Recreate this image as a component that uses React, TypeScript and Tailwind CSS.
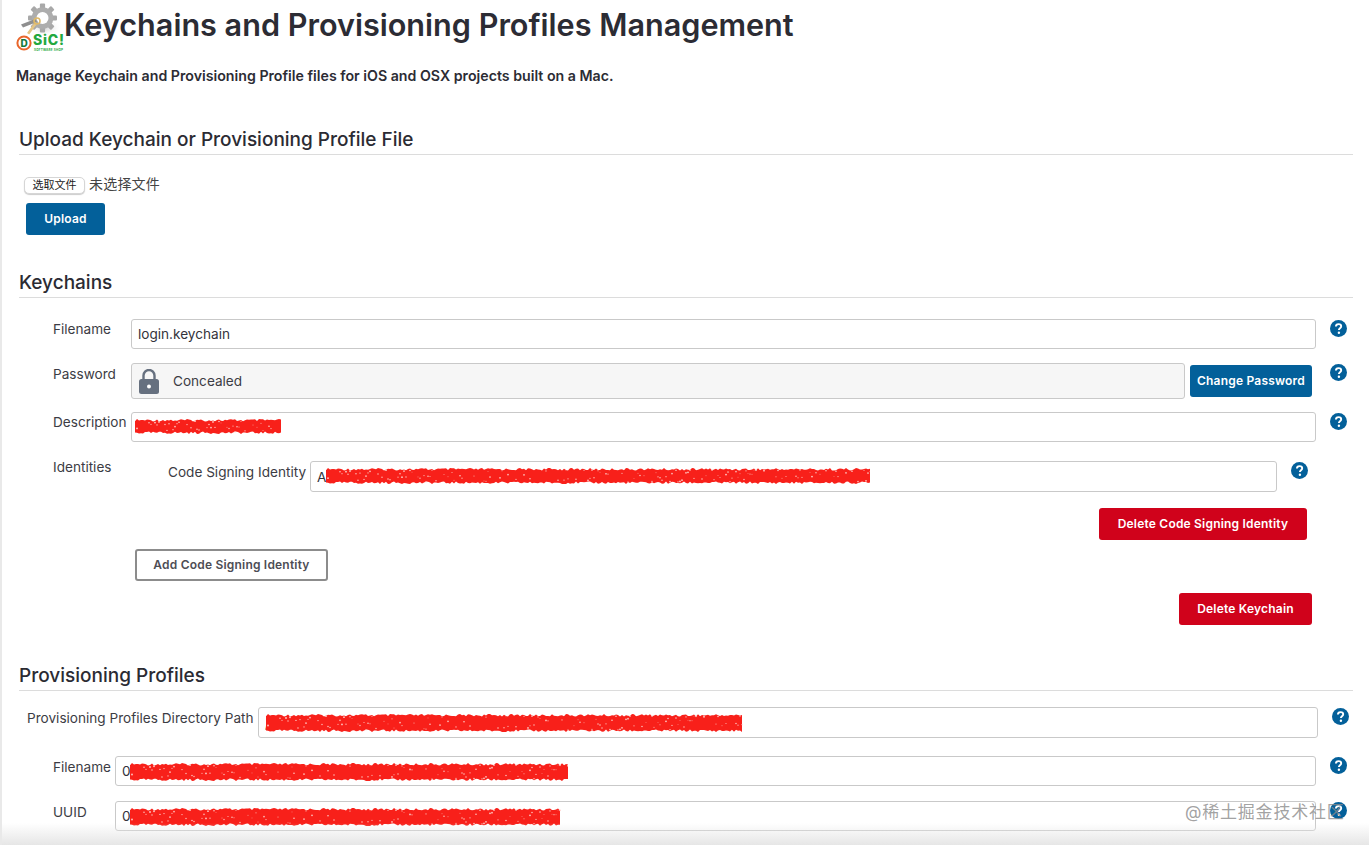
import type { ReactNode } from 'react';

function HelpIcon() {
  return (
    <svg viewBox="0 0 17 17" className="w-[17px] h-[17px] shrink-0">
      <circle cx="8.5" cy="8.5" r="8.5" fill="#03609a" />
      <path d="M5.9 6.6c0-1.6 1.2-2.5 2.7-2.5s2.6.9 2.6 2.2c0 1.9-2.3 1.9-2.3 3.6" fill="none" stroke="#fff" strokeWidth="1.9" />
      <circle cx="8.9" cy="12.7" r="1.2" fill="#fff" />
    </svg>
  );
}

function LockIcon() {
  return (
    <svg viewBox="0 0 20 25" className="w-[20px] h-[25px] shrink-0">
      <path d="M4.5 11V6.5a5.5 5.5 0 0 1 11 0V11" fill="none" stroke="#66707f" strokeWidth="2.4" />
      <rect x="0" y="10" width="20" height="15" rx="2.5" fill="#66707f" />
      <circle cx="10" cy="17.5" r="2" fill="#fff" />
    </svg>
  );
}

// the red marker that hides values in the screenshot
function noise(n: number) {
  const v = Math.sin(n * 12.9898) * 43758.5453;
  return v - Math.floor(v);
}

function Scribble({ width, height, className }: { width: number; height: number; className: string }) {
  const top: string[] = [];
  const bottom: string[] = [];
  const specks: ReactNode[] = [];
  for (let x = 0, i = 1; x <= width; x += 2, i++) {
    top.push(`${x},${(noise(i) * 2.5).toFixed(1)}`);
    bottom.unshift(`${x},${(height - noise(i + 500) * 2.5).toFixed(1)}`);
    if (noise(i + 900) > 0.55) {
      specks.push(
        <circle key={i} cx={x} cy={2 + noise(i + 1300) * (height - 4)} r={0.4 + noise(i + 1700) * 0.5} fill="#ffc9c4" />,
      );
    }
  }
  return (
    <svg width={width} height={height} className={className}>
      <polygon points={[...top, ...bottom].join(' ')} fill="#f8201a" />
      {specks}
    </svg>
  );
}

function Logo() {
  const teeth = [0, 45, 90, 135, 180, 225, 270, 315];
  return (
    <svg width="50" height="52" viewBox="0 0 50 52" className="shrink-0 -ml-px">
      <defs>
        <radialGradient id="halo" cx="50%" cy="50%" r="50%">
          <stop offset="0%" stopColor="#d4d4d4" />
          <stop offset="100%" stopColor="#ffffff" stopOpacity="0" />
        </radialGradient>
      </defs>
      <ellipse cx="29" cy="26" rx="17" ry="9" fill="url(#halo)" />
      <g transform="translate(26.5 16)">
        {teeth.map((r) => (
          <rect key={r} x="-2.6" y="-14.5" width="5.2" height="6" rx="1" fill="#a8a8a8" transform={`rotate(${r})`} />
        ))}
        <circle r="10.8" fill="#adadad" />
        <circle r="6" fill="#fff" />
      </g>
      <path d="M5 22.5l14-5.5 2 3-14 5.5z" fill="#8f8f8f" />
      <path d="M11 31l8-11 2.2 1.6-8 11z" fill="#e4c585" />
      <circle cx="21" cy="19" r="3" fill="none" stroke="#dfb968" strokeWidth="1.6" />
      <circle cx="8" cy="41" r="6.6" fill="#fff" stroke="#e9662b" strokeWidth="2" />
      <text x="8" y="44.6" fontSize="10" fontWeight="800" fill="#13793a" fontFamily="Inter, sans-serif" textAnchor="middle">D</text>
      <text x="17" y="43" fontSize="14" fontWeight="800" fill="#22a83e" fontFamily="Inter, sans-serif" textLength="31">SiC!</text>
      <text x="18" y="48.5" fontSize="3" fontWeight="700" fill="#22a83e" fontFamily="Inter, sans-serif" textLength="29">SOFTWARE SHOP</text>
    </svg>
  );
}

function SectionTitle({ children, className = '' }: { children: ReactNode; className?: string }) {
  return (
    <h2 className={`ml-[17px] mr-[16px] pt-[2px] border-b border-[#dcdcdc] text-[19px] leading-[28px] font-medium text-[#2b2b33] ${className}`}>
      {children}
    </h2>
  );
}

function TextField({ value, className = '' }: { value?: string; className?: string }) {
  return (
    <input
      readOnly
      defaultValue={value}
      className={`block h-[30px] min-w-0 border border-[#c9c9c9] rounded-[3px] bg-white px-[6px] text-[13.6px] text-[#33333b] outline-none ${className}`}
    />
  );
}

function Row({ label, labelWidth, children, className = '' }: { label: string; labelWidth: string; children: ReactNode; className?: string }) {
  return (
    <div className={`flex items-start ${className}`}>
      <label className={`shrink-0 whitespace-nowrap text-[13.6px] leading-[20px] text-[#3c3c44] ${labelWidth}`}>{label}</label>
      {children}
    </div>
  );
}

function Button({ children, color, className = '' }: { children: ReactNode; color: 'blue' | 'red'; className?: string }) {
  return (
    <button
      className={`block rounded-[3px] text-white text-[12px] font-semibold tracking-[0.2px] ${color === 'blue' ? 'bg-[#03609a]' : 'bg-[#d0021b]'} ${className}`}
    >
      {children}
    </button>
  );
}

export default function App() {
  return (
    <div className="relative w-[1369px] h-[845px] overflow-hidden bg-white border-l-2 border-[#e9e9e9] font-['Inter','Noto_Sans_CJK_SC',sans-serif]">
      <div className="flex items-start pl-[15px] pt-[2px] h-[52px]">
        <Logo />
        <h1 className="-ml-[2px] text-[30.6px] leading-[46px] font-semibold text-[#2c2c34] whitespace-nowrap">
          Keychains and Provisioning Profiles Management
        </h1>
      </div>
      <p className="ml-[14px] mt-[14px] text-[14.2px] leading-[20px] font-semibold text-[#2c2c34]">
        Manage Keychain and Provisioning Profile files for iOS and OSX projects built on a Mac.
      </p>

      <SectionTitle className="mt-[38px]">Upload Keychain or Provisioning Profile File</SectionTitle>
      <div className="flex items-center ml-[22px] mt-[18px] h-[20px]">
        <button className="h-[17px] w-[61px] mt-[4px] rounded-[5px] bg-white border border-[#d6d6d6] shadow-[0_1px_1px_rgba(0,0,0,0.2)] text-[11px] leading-[15px] text-[#222]">
          选取文件
        </button>
        <span className="ml-[4px] text-[14px] tracking-[0.2px] text-[#444]">未选择文件</span>
      </div>
      <Button color="blue" className="ml-[24px] mt-[10px] w-[79px] h-[32px]">Upload</Button>

      <SectionTitle className="mt-[32px]">Keychains</SectionTitle>

      <div className="ml-[51px] w-[1300px] mt-[21px]">
        <Row label="Filename" labelWidth="w-[78px]">
          <TextField value="login.keychain" className="w-[1185px]" />
          <div className="ml-[14px] mt-[1px]"><HelpIcon /></div>
        </Row>
        <Row label="Password" labelWidth="w-[78px] mt-[1px]" className="mt-[14px]">
          <div className="flex items-center w-[1054px] h-[36px] border border-[#c9c9c9] rounded-[3px] bg-[#f6f6f6] pl-[7px]">
            <LockIcon />
            <span className="ml-[14px] text-[13.6px] text-[#3c3c44]">Concealed</span>
          </div>
          <Button color="blue" className="ml-[5px] mt-[2px] w-[122px] h-[32px]">Change Password</Button>
          <div className="ml-[18px] mt-[1px]"><HelpIcon /></div>
        </Row>
        <Row label="Description" labelWidth="w-[78px]" className="mt-[13px]">
          <div className="relative">
            <TextField className="w-[1185px]" />
            <Scribble width={147} height={15} className="absolute left-[4px] top-[7px]" />
          </div>
          <div className="ml-[14px] mt-[1px]"><HelpIcon /></div>
        </Row>
        <Row label="Identities" labelWidth="w-[115px]" className="mt-[15px]">
          <div className="mt-[4px]">
            <div className="flex items-start">
              <span className="w-[142px] mt-[1px] whitespace-nowrap text-[13.6px] leading-[20px] text-[#3c3c44]">Code Signing Identity</span>
              <div className="relative">
                <TextField value="A" className="w-[967px] h-[31px]" />
                <Scribble width={544} height={16} className="absolute left-[16px] top-[7px]" />
              </div>
              <div className="ml-[14px] mt-[1px]"><HelpIcon /></div>
            </div>
            <Button color="red" className="ml-[931px] mt-[16px] w-[208px] h-[32px]">Delete Code Signing Identity</Button>
          </div>
        </Row>
        <button className="block ml-[82px] mt-[9px] w-[193px] h-[32px] rounded-[3px] border-2 border-[#8c8c8c] bg-white text-[12px] font-semibold tracking-[0.2px] text-[#4d4d55]">
          Add Code Signing Identity
        </button>
        <Button color="red" className="ml-[1126px] mt-[12px] w-[133px] h-[32px]">Delete Keychain</Button>
      </div>

      <SectionTitle className="mt-[35px]">Provisioning Profiles</SectionTitle>

      <div className="mt-[16px]">
        <Row label="Provisioning Profiles Directory Path" labelWidth="w-[231px] mt-[1px]" className="ml-[25px]">
          <div className="relative">
            <TextField value="/" className="w-[1060px] h-[31px]" />
            <Scribble width={477} height={18} className="absolute left-[8px] top-[7px]" />
          </div>
          <div className="ml-[14px] mt-[1px]"><HelpIcon /></div>
        </Row>
        <Row label="Filename" labelWidth="w-[62px] mt-[1px]" className="ml-[51px] mt-[18px]">
          <div className="relative">
            <TextField value="0" className="w-[1201px]" />
            <Scribble width={438} height={18} className="absolute left-[15px] top-[7px]" />
          </div>
          <div className="ml-[14px] mt-[1px]"><HelpIcon /></div>
        </Row>
        <Row label="UUID" labelWidth="w-[62px] mt-[1px]" className="ml-[51px] mt-[15px]">
          <div className="relative">
            <TextField value="0" className="w-[1201px]" />
            <Scribble width={431} height={18} className="absolute left-[15px] top-[7px]" />
          </div>
          <div className="ml-[14px] mt-[1px]"><HelpIcon /></div>
        </Row>
      </div>

      <div className="absolute left-0 right-0 bottom-0 h-[22px] bg-gradient-to-b from-transparent to-[#e6e6e6] pointer-events-none" />
      <span className="absolute left-[1183px] top-[800px] text-[17px] leading-[24px] tracking-[0.8px] text-[#8a8a8a]/80 whitespace-nowrap">@稀土掘金技术社区</span>
    </div>
  );
}
